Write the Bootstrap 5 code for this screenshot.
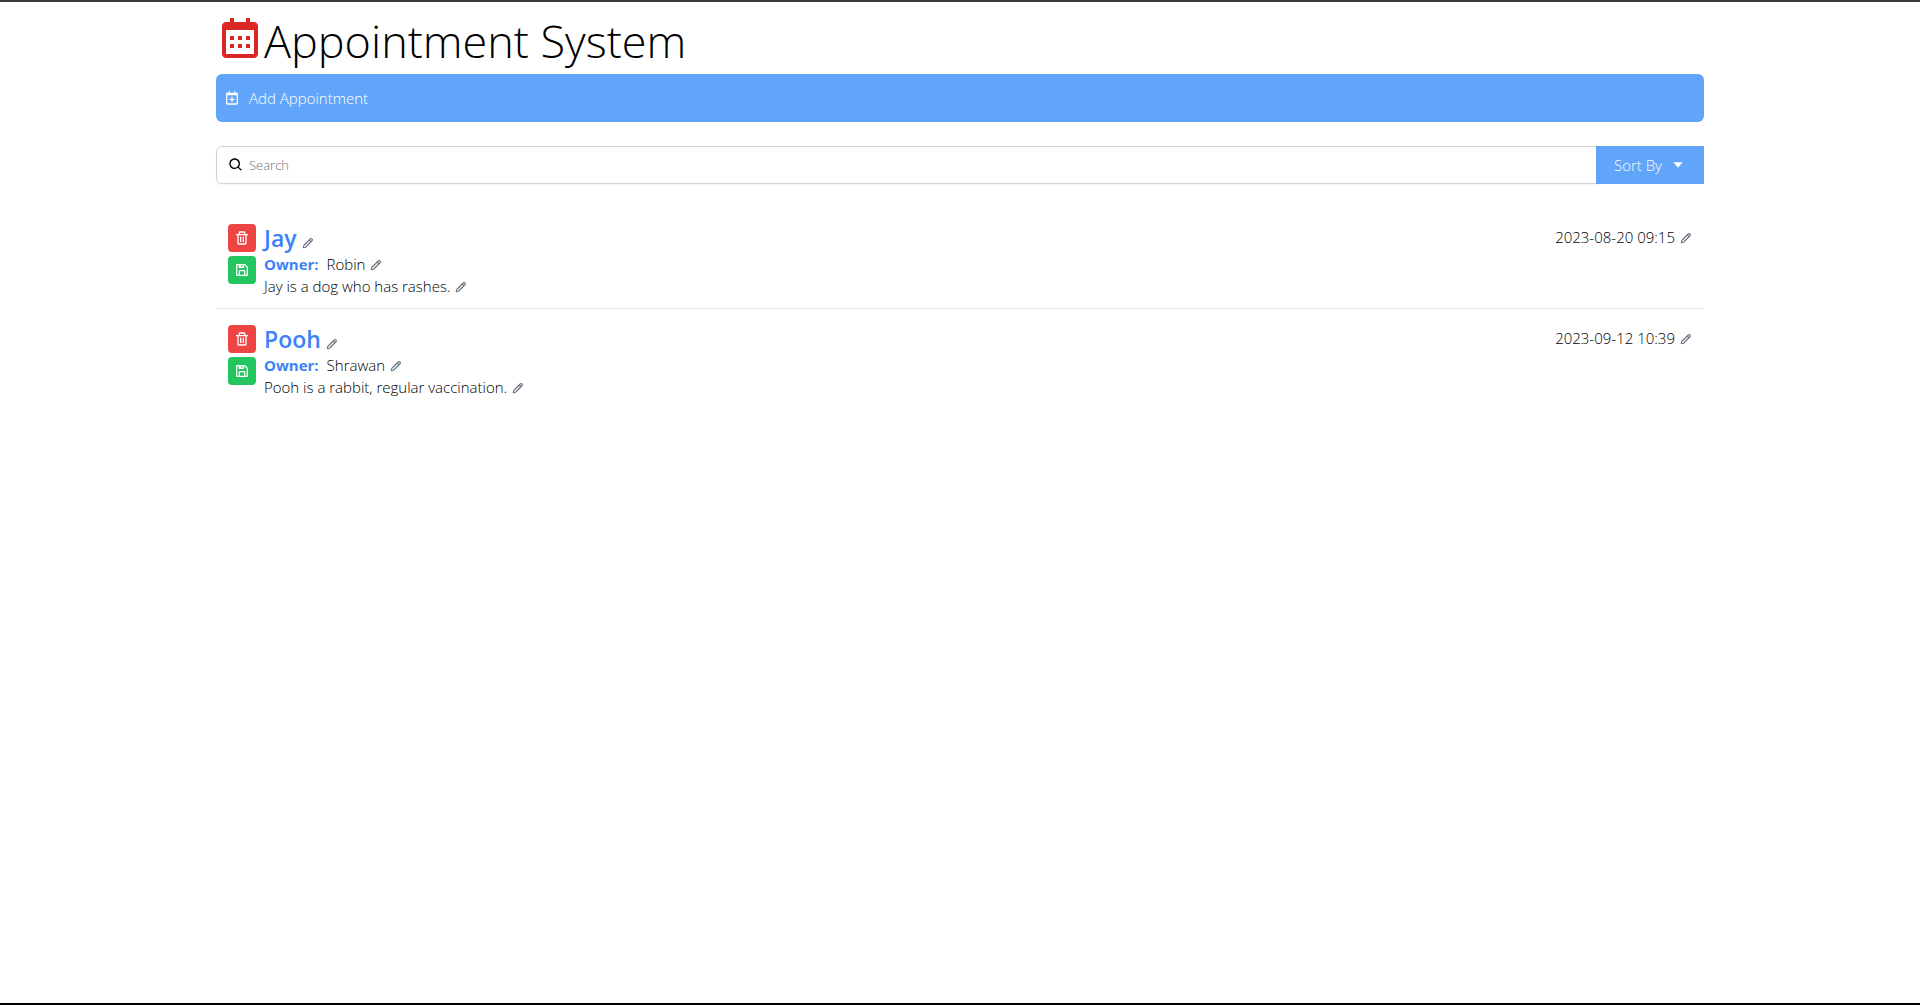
<!DOCTYPE html>
<html lang="en">
<head>
<meta charset="utf-8">
<meta name="viewport" content="width=device-width, initial-scale=1">
<title>Appointment System</title>
<link rel="stylesheet" href="https://cdn.jsdelivr.net/npm/bootstrap@5.3.0/dist/css/bootstrap.min.css">
<style>
  body { font-family: "Open Sans", "Noto Sans", sans-serif; font-weight: 300; font-size: 15px; line-height: 22px; color: #000; border-top: 2px solid #3b3a40; border-bottom: 2px solid #000; }
  svg { fill: currentColor; flex: none; }
  .page-wrap { max-width: 1536px; padding: 12px 24px; }
  .page-title { font-size: 45px; line-height: 54px; height: 48px; font-weight: 300; margin-bottom: 12px; }
  .title-icon { color: #dc2626; }
  .brand-btn, .brand-btn:hover { background: #60a5fa; color: #fff; border: 0; font-weight: 300; font-size: 15px; }
  .add-btn { height: 48px; border-radius: 6px; padding: 0 8px; gap: 9px; margin-bottom: 24px; }
  .search-icon { left: 12px; top: 11px; z-index: 6; }
  .search-box { height: 38px; border-color: #d1d5db; border-radius: 6px 0 0 6px !important; padding: 0 12px 0 32px; font-size: 13px; font-weight: 300; box-shadow: 0 1px 2px rgba(0,0,0,.05); }
  .search-box::placeholder { color: #6b7280; }
  .sort-btn { padding: 0 18px; gap: 8px; border-radius: 0; }
  .appt-list { margin-top: 24px; }
  .appt-item { padding: 16px 12px 11px; border-bottom: 1px solid #e5e7eb; }
  .appt-item:last-child { border-bottom: 0; }
  .square-btn { width: 28px; height: 28px; border-radius: 4px; color: #fff; }
  .del-btn, .del-btn:hover { background: #ef4444; color: #fff; }
  .save-btn, .save-btn:hover { background: #22c55e; color: #fff; }
  .pet-name { font-size: 23px; line-height: 28px; font-weight: 600; color: #3b82f6; margin-bottom: 1px; }
  .owner-label { font-weight: 700; color: #3b82f6; margin-right: 8px; }
  .appt-date { line-height: 26px; }
  .edit-btn { color: #6b7280; line-height: 12px; margin-left: 5px; vertical-align: -1px; }
  .pet-name .edit-btn { vertical-align: -2px; }
  .edit-btn svg { display: block; }
</style>
<script src="https://cdn.jsdelivr.net/npm/bootstrap@5.3.0/dist/js/bootstrap.bundle.min.js"></script>
</head>
<body class="min-vh-100">
<svg class="d-none" aria-hidden="true">
  <symbol id="i-frame" viewBox="0 0 24 24"><path d="M5 22h14c1.103 0 2-.897 2-2V6c0-1.103-.897-2-2-2h-2V2h-2v2H9V2H7v2H5c-1.103 0-2 .897-2 2v14c0 1.103.897 2 2 2zM19 8l.001 12H5V8h14z"/></symbol>
  <symbol id="i-search" viewBox="0 0 24 24"><path d="M10 18a7.952 7.952 0 0 0 4.897-1.688l4.396 4.396 1.414-1.414-4.396-4.396A7.952 7.952 0 0 0 18 10c0-4.411-3.589-8-8-8s-8 3.589-8 8 3.589 8 8 8zm0-14c3.309 0 6 2.691 6 6s-2.691 6-6 6-6-2.691-6-6 2.691-6 6-6z"/></symbol>
  <symbol id="i-trash" viewBox="0 0 24 24"><path d="M5 20a2 2 0 0 0 2 2h10a2 2 0 0 0 2-2V8h2V6h-4V4a2 2 0 0 0-2-2H9a2 2 0 0 0-2 2v2H3v2h2zM9 4h6v2H9zM8 8h9v12H7V8z"/><path d="M9 10h2v8H9zm4 0h2v8h-2z"/></symbol>
  <symbol id="i-save" viewBox="0 0 24 24"><path d="M5 21h14a2 2 0 0 0 2-2V8a1 1 0 0 0-.29-.71l-4-4A1 1 0 0 0 16 3H5a2 2 0 0 0-2 2v14a2 2 0 0 0 2 2zm10-2H9v-5h6zM13 7h-2V5h2zM5 5h2v4h8V5h.59L19 8.41V19h-2v-5a2 2 0 0 0-2-2H9a2 2 0 0 0-2 2v5H5z"/></symbol>
  <symbol id="i-pencil" viewBox="0 0 24 24"><path d="M2.500 21.500l1-4.500L17 3.500q1.500-1 3 .5t.5 3L7 20.500zM14.500 6l3.500 3.500" fill="none" stroke="currentColor" stroke-width="2.200" stroke-linejoin="round"/></symbol>
</svg>
<main class="container-fluid page-wrap">
  <h1 class="page-title d-flex"><svg class="title-icon" width="48" height="48" viewBox="0 0 24 24" aria-hidden="true"><path d="M7 11h2v2H7zm0 4h2v2H7zm4-4h2v2h-2zm0 4h2v2h-2zm4-4h2v2h-2zm0 4h2v2h-2z"/><use href="#i-frame"/></svg>Appointment System</h1>
  <button type="button" class="btn brand-btn add-btn w-100 d-flex align-items-center"><svg width="16" height="16" viewBox="0 0 24 24" aria-hidden="true"><path d="M8 15h3v3h2v-3h3v-2h-3v-3h-2v3H8z"/><use href="#i-frame"/></svg>Add Appointment</button>
  <div class="input-group">
    <svg class="position-absolute search-icon" width="16" height="16" aria-hidden="true"><use href="#i-search"/></svg>
    <input type="text" class="form-control search-box ms-0" placeholder="Search" aria-label="Search">
    <button type="button" class="btn brand-btn sort-btn d-flex align-items-center">Sort By<svg width="16" height="16" viewBox="0 0 24 24" aria-hidden="true"><path d="M5 8h14l-7 8z"/></svg></button>
  </div>
  <ul class="appt-list list-unstyled mb-0">
    <li class="appt-item d-flex gap-2 align-items-start">
      <div class="d-flex flex-column gap-1">
        <button type="button" class="btn square-btn del-btn border-0 p-0 d-flex align-items-center justify-content-center" aria-label="Delete"><svg width="16" height="16"><use href="#i-trash"/></svg></button>
        <button type="button" class="btn square-btn save-btn border-0 p-0 d-flex align-items-center justify-content-center" aria-label="Save"><svg width="16" height="16"><use href="#i-save"/></svg></button>
      </div>
      <div class="flex-grow-1">
        <h2 class="pet-name">Jay<button type="button" class="btn edit-btn border-0 p-0" aria-label="Edit name"><svg width="12" height="12"><use href="#i-pencil"/></svg></button></h2>
        <div><span class="owner-label">Owner:</span>Robin<button type="button" class="btn edit-btn border-0 p-0" aria-label="Edit owner"><svg width="12" height="12"><use href="#i-pencil"/></svg></button></div>
        <div>Jay is a dog who has rashes.<button type="button" class="btn edit-btn border-0 p-0" aria-label="Edit notes"><svg width="12" height="12"><use href="#i-pencil"/></svg></button></div>
      </div>
      <div class="appt-date">2023-08-20 09:15<button type="button" class="btn edit-btn border-0 p-0" aria-label="Edit date"><svg width="12" height="12"><use href="#i-pencil"/></svg></button></div>
    </li>
    <li class="appt-item d-flex gap-2 align-items-start">
      <div class="d-flex flex-column gap-1">
        <button type="button" class="btn square-btn del-btn border-0 p-0 d-flex align-items-center justify-content-center" aria-label="Delete"><svg width="16" height="16"><use href="#i-trash"/></svg></button>
        <button type="button" class="btn square-btn save-btn border-0 p-0 d-flex align-items-center justify-content-center" aria-label="Save"><svg width="16" height="16"><use href="#i-save"/></svg></button>
      </div>
      <div class="flex-grow-1">
        <h2 class="pet-name">Pooh<button type="button" class="btn edit-btn border-0 p-0" aria-label="Edit name"><svg width="12" height="12"><use href="#i-pencil"/></svg></button></h2>
        <div><span class="owner-label">Owner:</span>Shrawan<button type="button" class="btn edit-btn border-0 p-0" aria-label="Edit owner"><svg width="12" height="12"><use href="#i-pencil"/></svg></button></div>
        <div>Pooh is a rabbit, regular vaccination.<button type="button" class="btn edit-btn border-0 p-0" aria-label="Edit notes"><svg width="12" height="12"><use href="#i-pencil"/></svg></button></div>
      </div>
      <div class="appt-date">2023-09-12 10:39<button type="button" class="btn edit-btn border-0 p-0" aria-label="Edit date"><svg width="12" height="12"><use href="#i-pencil"/></svg></button></div>
    </li>
  </ul>
</main>
</body>
</html>
